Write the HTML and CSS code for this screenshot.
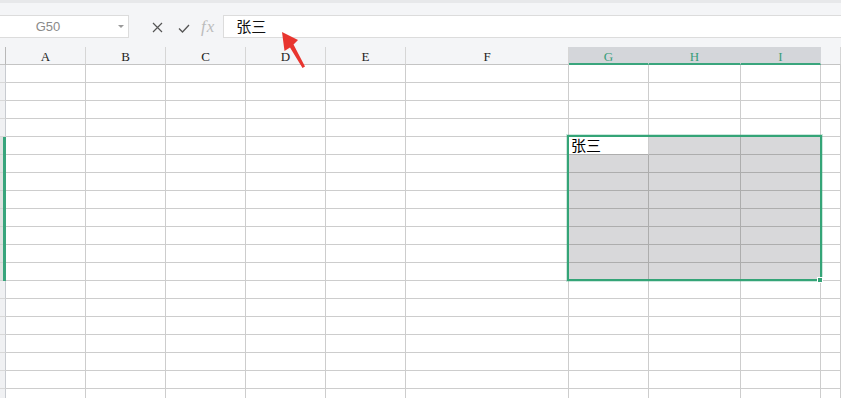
FILE: index.html
```html
<!DOCTYPE html>
<html lang="zh-CN">
<head>
    <meta charset="UTF-8">
    <title>表格 - 编辑栏</title>
    <link rel="stylesheet" href="styles.css">
</head>
<body>

    <div class="app">
        <!-- Name box + formula bar -->
        <div class="toolbar">
            <div class="namebox">
                <span class="cell-ref">G50</span>
                <svg class="caret" width="6" height="4" viewBox="0 0 6 4"><path d="M0 0 L6 0 L3 3 Z" fill="#9a9a9a"/></svg>
            </div>
            <div class="fbtns">
                <svg class="btn-x" width="11" height="11" viewBox="0 0 11 11"><path d="M1 1 L10 10 M10 1 L1 10" stroke="#555" stroke-width="1.2" fill="none"/></svg>
                <svg class="btn-ok" width="12" height="9" viewBox="0 0 12 9"><path d="M1 4.5 L4.5 8 L11 1" stroke="#555" stroke-width="1.3" fill="none"/></svg>
                <span class="fx">fx</span>
            </div>
            <div class="formula">张三</div>
        </div>

        <!-- Grid -->
        <div class="sheet" id="sheet"></div>

        <!-- Overlays -->
        <div class="selection"></div>
        <div class="fill-handle"></div>
        <svg class="arrow" width="841" height="398" viewBox="0 0 841 398">
            <polygon points="282,32 298,40 293.5,44.5 305,66.5 302.5,68 290,47.5 284.5,51" fill="#e8352f"/>
        </svg>
    </div>

    <script>
        const cols = ['', 'A', 'B', 'C', 'D', 'E', 'F', 'G', 'H', 'I', ''];
        const sheet = document.getElementById('sheet');

        // header row
        cols.forEach((name, i) => {
            const cell = document.createElement('div');
            cell.classList.add('cell', 'col-head');
            if (i === 0) cell.classList.add('corner');
            if (i >= 7 && i <= 9) cell.classList.add('on');
            cell.textContent = name;
            sheet.appendChild(cell);
        });

        // rows, selection is G5:I12
        for (let r = 1; r <= 19; r++) {
            cols.forEach((name, i) => {
                const cell = document.createElement('div');
                cell.classList.add('cell');
                const inSel = r >= 5 && r <= 12;
                if (i === 0) {
                    cell.classList.add('row-head');
                    if (inSel) cell.classList.add('on');
                } else if (inSel && i >= 7 && i <= 9) {
                    if (r === 5 && i === 7) {
                        cell.classList.add('active');
                        cell.textContent = '张三';
                    } else {
                        cell.classList.add('sel');
                    }
                }
                sheet.appendChild(cell);
            });
        }
    </script>

</body>
</html>
```

FILE: styles.css
```css
body {
    margin: 0;
    padding: 0;
    background: #fff;
    font-family: "Liberation Sans", "Noto Sans CJK SC", sans-serif;
    overflow: hidden;
}
.app {
    position: relative;
    width: 841px;
    height: 398px;
    overflow: hidden;
}
.toolbar {
    height: 47px;
    box-sizing: border-box;
    border-top: 3px solid #e7e8ea;
    background: #f4f5f7;
    padding-top: 12px;
    display: flex;
    align-items: flex-start;
}
.namebox {
    margin-left: -1px;
    width: 130px;
    height: 23px;
    box-sizing: border-box;
    border: 1px solid #dcdcdc;
    background: #fff;
    display: flex;
    align-items: center;
}
.cell-ref {
    width: 96px;
    text-align: center;
    font-size: 13px;
    color: #8a8a8a;
}
.caret {
    margin-left: auto;
    margin-right: 4px;
}
.fbtns {
    height: 23px;
    margin-left: 23px;
    display: flex;
    align-items: center;
}
.btn-x {
    margin-top: 2px;
}
.btn-ok {
    margin-left: 15px;
    margin-top: 3px;
}
.fx {
    margin-left: 11px;
    font-family: "Liberation Serif", serif;
    font-style: italic;
    font-size: 17px;
    color: #bcbcbc;
    letter-spacing: 1px;
}
.formula {
    flex: 1;
    margin-left: 8px;
    height: 23px;
    box-sizing: border-box;
    border: 1px solid #dcdcdc;
    border-right: none;
    background: #fff;
    padding-left: 12px;
    font-family: "Noto Sans CJK SC", sans-serif;
    font-size: 15px;
    line-height: 20px;
    color: #111;
}
.sheet {
    display: grid;
    grid-template-columns: 6px 80px 80px 80px 80px 80px 163px 80px 92px 80px 1fr;
    grid-auto-rows: 18px;
}
.cell {
    box-sizing: border-box;
    border-right: 1px solid #cdcdcd;
    border-bottom: 1px solid #cdcdcd;
}
.col-head {
    background: #f4f5f7;
    border-right-color: #d6d6d6;
    border-bottom-color: #c4c4c4;
    text-align: center;
    font-family: "Liberation Serif", serif;
    font-size: 13px;
    line-height: 20px;
    color: #222;
}
.col-head.corner {
    border-right-color: #b8b8b8;
}
.col-head.on {
    background: #d4d6da;
    color: #3a9e7b;
    border-right-color: #d4d6da;
    border-bottom: 2px solid #3aa57d;
}
.row-head {
    background: #f0f1f3;
    border-right-color: #c8cbd0;
    border-bottom-color: #d8d8d8;
}
.row-head.on {
    border-bottom: none;
    border-right: 3px solid #38a57c;
    background: linear-gradient(to top, #cfd3d1 1px, #dde2e0 1px);
}
.sel {
    background: #d8d8da;
    border-right-color: #adadad;
    border-bottom-color: #adadad;
}
.active {
    background: #fff;
    border-bottom-color: #adadad;
    font-family: "Noto Sans CJK SC", sans-serif;
    font-size: 15px;
    line-height: 16px;
    padding-left: 2px;
    color: #000;
}
.selection {
    position: absolute;
    left: 567px;
    top: 135px;
    width: 255px;
    height: 146px;
    box-sizing: border-box;
    border: 2px solid #34a477;
    box-shadow: 0 0 0 1px rgba(52, 164, 119, 0.25);
    pointer-events: none;
}
.fill-handle {
    position: absolute;
    left: 817px;
    top: 277px;
    width: 6px;
    height: 6px;
    box-sizing: border-box;
    background: #34a477;
    border: 1px solid #fff;
}
.arrow {
    position: absolute;
    left: 0;
    top: 0;
    pointer-events: none;
}
```
